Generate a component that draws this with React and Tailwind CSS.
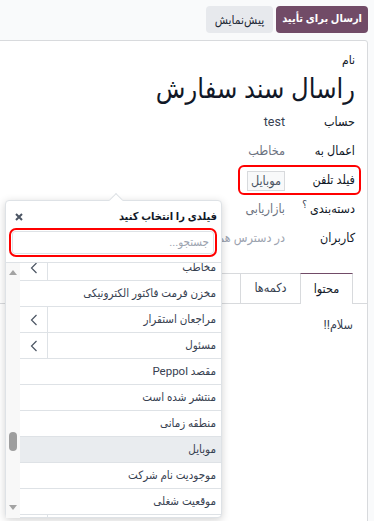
import React from "react";

const fields = [
  { name: "مخاطب", sub: true },
  { name: "مخزن فرمت فاکتور الکترونیکی" },
  { name: "مراجعان استقرار", sub: true },
  { name: "مسئول", sub: true },
  { name: "مقصد Peppol" },
  { name: "منتشر شده است" },
  { name: "منطقه زمانی" },
  { name: "موبایل", active: true },
  { name: "موجودیت نام شرکت" },
  { name: "موقعیت شغلی" },
  { name: "نام شرکت", sub: true },
];

function Chevron() {
  return (
    <svg width="8" height="12" viewBox="0 0 8 12" fill="none">
      <path d="M6.5 1 L1.5 6 L6.5 11" stroke="#4b5563" strokeWidth="1.2" />
    </svg>
  );
}

function FieldRow({ label, children, hint }) {
  return (
    <div className="flex h-[29px] items-center">
      <div className="w-[70px] shrink-0 font-medium text-[#111827]">
        {label}
        {hint && <sup className="mr-[3px] text-[10px] text-[#374151]">؟</sup>}
      </div>
      <div className="flex-1 text-[#374151]">{children}</div>
    </div>
  );
}

export default function App() {
  return (
    <div
      dir="rtl"
      className="relative h-[521px] w-[374px] overflow-hidden bg-[#f9fafb] text-[12.5px]"
      style={{ fontFamily: '"Roboto", "DejaVu Sans Condensed", "DejaVu Sans", sans-serif' }}
    >
      {/* ACTION BUTTONS */}
      <div className="flex gap-[3px] pr-[6px] pt-[6px]">
        <button className="h-[27px] rounded-[4px] bg-[#714b67] px-[6px] text-[11px] font-bold text-white">
          ارسال برای تأیید
        </button>
        <button className="h-[27px] rounded-[4px] bg-[#e7e9ed] px-[9px] text-[12px] text-[#1f2937]">
          پیش‌نمایش
        </button>
      </div>

      {/* FORM SHEET */}
      <div className="mr-[6px] -ml-[10px] mt-[7px] h-[600px] rounded-tr-[3px] border border-[#d8dadd] bg-white">
        <div className="pr-[12px] pt-[12px]">
          <div className="text-[12px] leading-[14px] text-[#111827]">نام</div>
          <div className="mt-[4px] text-[27px] leading-[36px] text-[#111827]">راسال سند سفارش</div>

          <div className="mt-[1px]">
            <FieldRow label="حساب">test</FieldRow>
            <FieldRow label="اعمال به">
              <span className="text-[#6b7280]">مخاطب</span>
            </FieldRow>
            <div className="relative">
              <FieldRow label="فیلد تلفن">
                <span className="inline-block h-[20px] border border-[#d8dadd] bg-[#f8f9fa] px-[3px] leading-[18px] text-[#4b5563]">
                  موبایل
                </span>
              </FieldRow>
              <div className="pointer-events-none absolute -top-[1px] right-[-6px] h-[30px] w-[123px] rounded-[6px] border-[2.5px] border-[#ff0000]" />
            </div>
            <FieldRow label="دسته‌بندی" hint>
              <span className="text-[#6b7280]">بازاریابی</span>
            </FieldRow>
            <FieldRow label="کاربران">
              <span className="text-[#9ca3af]">در دسترس همه کاربران</span>
            </FieldRow>
          </div>
        </div>

        {/* TABS */}
        <div className="mt-[20px] flex h-[31px] border-b border-[#d8dadd] pr-[14px]">
          <div className="-mb-px flex h-[31px] w-[53px] items-center justify-center border-x border-t border-[#d8dadd] border-t-[#714b67] bg-white text-[#111827]">
            محتوا
          </div>
          <div className="flex h-[30px] w-[60px] items-center justify-center border-t border-l border-[#d8dadd] text-[#374151]">
            دکمه‌ها
          </div>
          <div className="flex h-[30px] w-[60px] items-center justify-center border-t border-l border-[#d8dadd] text-[#374151]">
            دیگر
          </div>
        </div>
        <div className="pr-[14px] pt-[12px] text-[#374151]">سلام!!</div>
      </div>

      {/* FIELD SELECTOR POPOVER */}
      <div className="absolute left-[5px] top-[200px] h-[318px] w-[217px] rounded-[4px] border border-[#dee2e6] bg-white shadow-[0_2px_8px_rgba(0,0,0,0.18)]">
        <div className="absolute -top-[6px] left-[105px] h-[10px] w-[10px] rotate-45 border-l border-t border-[#dee2e6] bg-white" />
        <div className="relative mt-[8px] flex h-[16px] items-center justify-between pl-[9px] pr-[4px]">
          <span className="text-[11px] font-bold text-[#111827]">فیلدی را انتخاب کنید</span>
          <svg width="8" height="8" viewBox="0 0 8 8">
            <path d="M1 1 L7 7 M7 1 L1 7" stroke="#4b5563" strokeWidth="2" />
          </svg>
        </div>
        <div className="ml-[3px] mr-[4px] mt-[3px] h-[29px] rounded-[7px] border-[2.5px] border-[#ff0000] p-px">
          <div className="flex h-full items-center rounded-[3px] border border-[#dee2e6] pr-[4px] text-[11.5px] text-[#9ca3af]">
            جستجو...
          </div>
        </div>

        <div className="mt-[5px] flex h-[256px] overflow-hidden border-t border-[#dee2e6]">
          <div className="min-w-0 flex-1">
            <div className="-mt-[8px]">
              {fields.map((f) => (
                <div
                  key={f.name}
                  className={`flex h-[26px] items-center border-b border-[#dee2e6] text-[11.5px] text-[#374151] ${
                    f.active ? "bg-[#e9ecef]" : ""
                  }`}
                >
                  <span className="flex-1 truncate pr-[5px]">{f.name}</span>
                  {f.sub && (
                    <span className="flex h-full w-[28px] items-center justify-center border-r border-[#dee2e6]">
                      <Chevron />
                    </span>
                  )}
                </div>
              ))}
            </div>
          </div>
          {/* scrollbar */}
          <div className="relative w-[14px] shrink-0 bg-[#f8f8f8]">
            <div className="absolute left-[3px] top-[7px] h-0 w-0 border-x-[4.5px] border-b-[5px] border-x-transparent border-b-[#a3a3a3]" />
            <div className="absolute left-[3px] top-[169px] h-[19px] w-[8px] rounded-full bg-[#9e9e9e]" />
            <div className="absolute bottom-[8px] left-[3px] h-0 w-0 border-x-[4.5px] border-t-[5px] border-x-transparent border-t-[#a3a3a3]" />
          </div>
        </div>
      </div>
    </div>
  );
}
